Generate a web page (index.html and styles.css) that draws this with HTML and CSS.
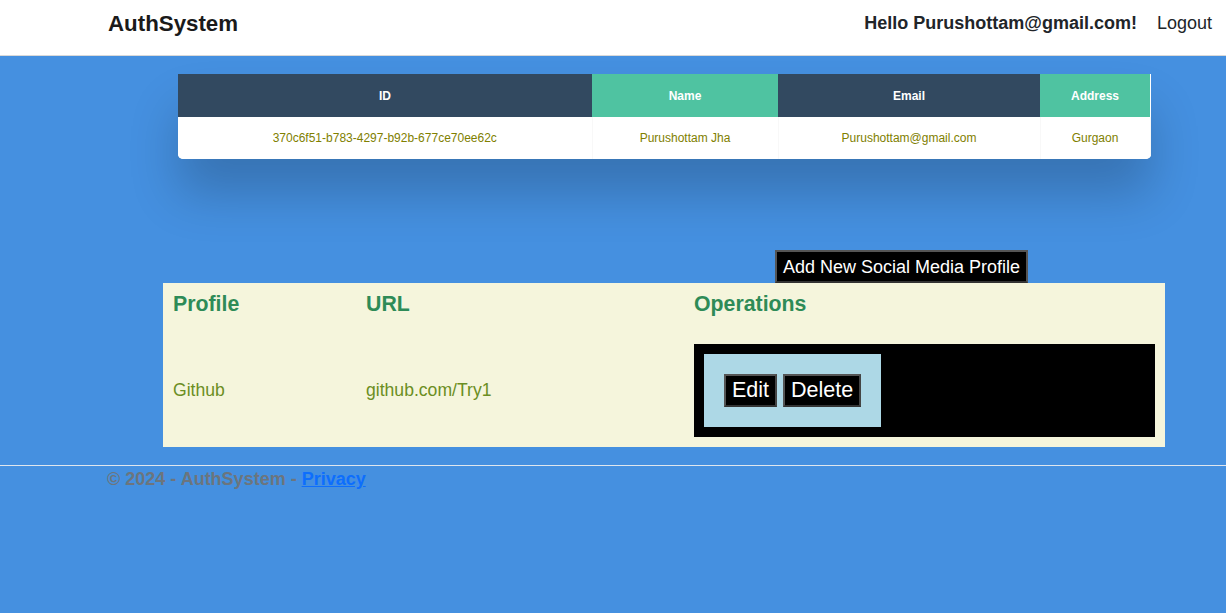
FILE: index.html
```html
<!DOCTYPE html>
<html lang="en">
<head>
<meta charset="utf-8">
<title>AuthSystem</title>
<link rel="stylesheet" href="styles.css">
</head>
<body>
<header class="topbar">
  <a class="brand" href="#">AuthSystem</a>
  <nav class="user-nav">
    <span class="hello">Hello Purushottam@gmail.com!</span>
    <a class="logout" href="#">Logout</a>
  </nav>
</header>
<main class="main">
  <div class="table-wrapper">
    <table class="fl-table">
      <colgroup>
        <col class="c-id"><col class="c-name"><col class="c-email"><col class="c-addr">
      </colgroup>
      <thead>
        <tr><th class="dark">ID</th><th class="teal">Name</th><th class="dark">Email</th><th class="teal">Address</th></tr>
      </thead>
      <tbody>
        <tr><td>370c6f51-b783-4297-b92b-677ce70ee62c</td><td>Purushottam Jha</td><td>Purushottam@gmail.com</td><td>Gurgaon</td></tr>
      </tbody>
    </table>
  </div>
  <section class="profiles">
    <div class="add-row"><button class="add-btn">Add New Social Media Profile</button></div>
    <table class="profile-table">
      <colgroup>
        <col class="p-profile"><col class="p-url"><col class="p-ops">
      </colgroup>
      <thead>
        <tr class="head-row"><th>Profile</th><th>URL</th><th>Operations</th></tr>
      </thead>
      <tbody>
        <tr>
          <td>Github</td>
          <td>github.com/Try1</td>
          <td>
            <div class="ops-box">
              <div class="ops-inner"><button class="op-btn">Edit</button> <button class="op-btn">Delete</button></div>
            </div>
          </td>
        </tr>
      </tbody>
    </table>
  </section>
</main>
<footer class="footer">
  <div class="footer-text">© 2024 - AuthSystem - <a href="#">Privacy</a></div>
</footer>
</body>
</html>
```

FILE: styles.css
```css
* { box-sizing: border-box; }
html, body { margin: 0; padding: 0; }
body {
  background: #4590e0;
  font-family: "Liberation Sans", Arial, sans-serif;
  color: #212529;
  min-height: 613px;
}
.topbar {
  background: #fff;
  height: 56px;
  border-bottom: 1px solid #d9d9d9;
  display: flex;
  align-items: center;
  justify-content: space-between;
  padding: 0 14px 8px 108px;
}
.brand {
  font-size: 22.3px;
  font-weight: bold;
  color: #1a1a1a;
  text-decoration: none;
}
.user-nav { display: flex; align-items: center; gap: 20px; }
.hello { font-size: 18px; font-weight: bold; color: #212529; }
.logout { font-size: 18px; color: #212529; text-decoration: none; }

.main { padding-top: 18px; }
.table-wrapper {
  margin-left: 178px;
  width: 973px;
  background: #fff;
  border-radius: 0 0 5px 5px;
  overflow: hidden;
  box-shadow: 0 35px 50px rgba(0, 0, 0, 0.2);
}
.fl-table {
  border-collapse: collapse;
  table-layout: fixed;
  width: 972px;
  font-size: 12px;
  background: #fff;
}
.c-id { width: 414px; }
.c-name { width: 186px; }
.c-email { width: 262px; }
.c-addr { width: 110px; }
.fl-table th, .fl-table td { text-align: center; padding: 0 8px; white-space: nowrap; }
.fl-table th { height: 43px; color: #fff; font-weight: bold; }
.fl-table th.dark { background: #324960; }
.fl-table th.teal { background: #4fc3a1; }
.fl-table td { height: 42px; color: #808000; border-right: 1px solid #f8f8f8; }

.profiles { margin: 91px 0 0 163px; width: 1002px; }
.add-row { padding-left: 612px; display: flex; }
.add-btn {
  display: block;
  background: #000;
  color: #fff;
  font-family: "Liberation Sans", Arial, sans-serif;
  font-size: 18px;
  height: 33px;
  padding: 0 6px;
  border: 2px solid #555;
  border-bottom-color: #333;
  line-height: 1;
}
.profile-table {
  border-collapse: collapse;
  table-layout: fixed;
  width: 1002px;
  background: #f5f5dc;
}
.p-profile { width: 193px; }
.p-url { width: 328px; }
.p-ops { width: 481px; }
.head-row { height: 51px; }
.profile-table th {
  text-align: left;
  vertical-align: top;
  padding: 9px 10px 0;
  font-size: 21.3px;
  font-weight: bold;
  color: #2e8b57;
  line-height: 24px;
}
.profile-table td {
  padding: 10px;
  font-size: 17.6px;
  color: #6b8e23;
  vertical-align: middle;
}
.ops-box { background: #000; padding: 10px; }
.ops-inner {
  display: inline-block;
  background: #add8e6;
  padding: 20px;
  font-size: 21.5px;
  line-height: 0;
  white-space: nowrap;
}
.op-btn {
  background: #000;
  color: #fff;
  font-family: "Liberation Sans", Arial, sans-serif;
  font-size: 21.5px;
  height: 33px;
  padding: 0 6px;
  border: 2px solid #555;
  border-right-color: #444;
  border-bottom-color: #333;
  line-height: 1;
  vertical-align: top;
}

.footer {
  margin-top: 18px;
  border-top: 1px solid #dfe6ee;
}
.footer-text {
  padding-left: 107px;
  font-size: 18px;
  line-height: 27px;
  font-weight: bold;
  color: #6c757d;
}
.footer-text a { color: #0d6efd; }
```
